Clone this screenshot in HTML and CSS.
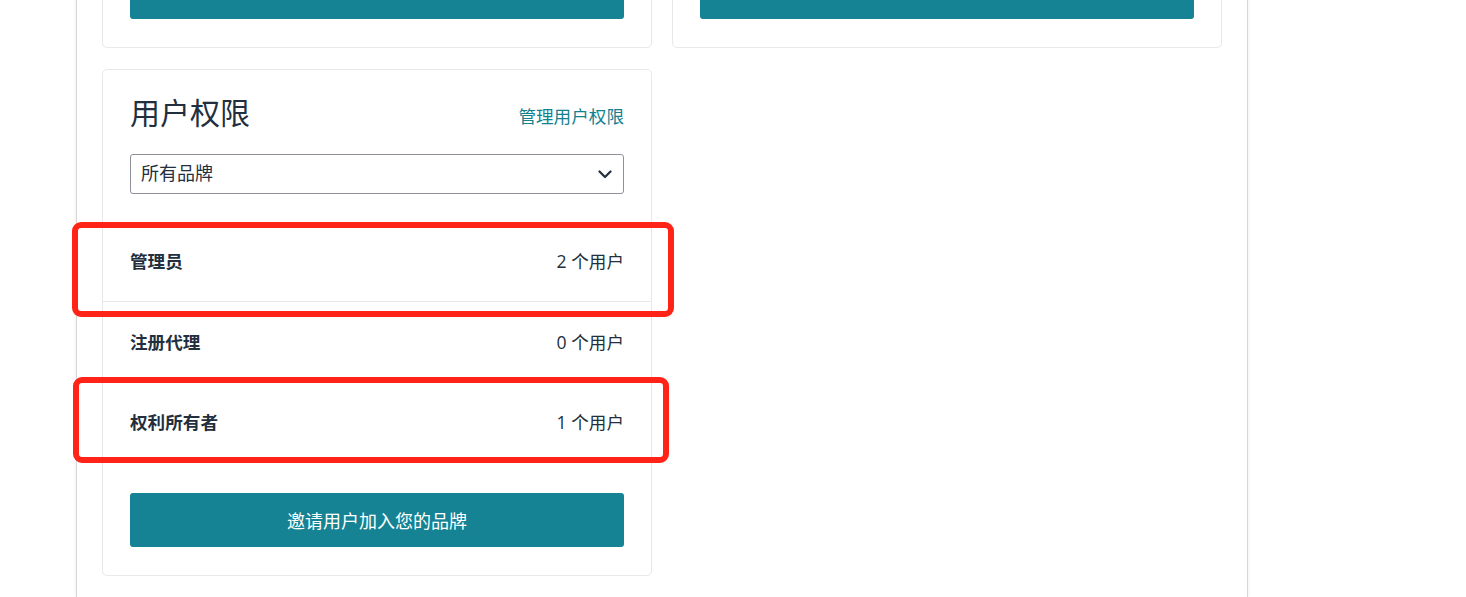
FILE: index.html
```html
<!DOCTYPE html>
<html lang="zh-CN">
<head>
<meta charset="utf-8">
<title>用户权限</title>
<link rel="stylesheet" href="styles.css">
</head>
<body>
<div class="page">
  <div class="grid">
    <div class="card top-card">
      <button class="btn">&nbsp;</button>
    </div>
    <div class="card top-card">
      <button class="btn">&nbsp;</button>
    </div>
    <div class="card perm-card">
      <div class="perm-head">
        <h2 class="perm-title">用户权限</h2>
        <a class="perm-link" href="#">管理用户权限</a>
      </div>
      <div class="select">
        <span class="select-text">所有品牌</span>
        <svg class="chev" width="14" height="9" viewBox="0 0 14 9"><path d="M1.5 1.5 L7 7 L12.5 1.5" fill="none" stroke="#232f3e" stroke-width="2.2" stroke-linecap="round" stroke-linejoin="round"/></svg>
      </div>
      <div class="rows">
        <div class="row row-sep"><span class="role">管理员</span><span class="count">2 个用户</span></div>
        <div class="row"><span class="role">注册代理</span><span class="count">0 个用户</span></div>
        <div class="row"><span class="role">权利所有者</span><span class="count">1 个用户</span></div>
      </div>
      <button class="btn invite">邀请用户加入您的品牌</button>
    </div>
  </div>
</div>
<div class="mark mark-1"></div>
<div class="mark mark-2"></div>
</body>
</html>
```

FILE: styles.css
```css
html, body {
  margin: 0;
  padding: 0;
  height: 100%;
  overflow: hidden;
  background: #ffffff;
}
body {
  position: relative;
  font-family: "Open Sans", "Noto Sans CJK SC", sans-serif;
  color: #232f3e;
}
.page {
  margin-left: 76px;
  margin-top: -64px;
  width: 1172px;
  height: calc(100% + 64px);
  border-left: 1px solid #d6d6d8;
  border-right: 1px solid #d6d6d8;
  box-shadow: 0 0 4px rgba(0,0,0,0.08);
  background: #fff;
  box-sizing: border-box;
}
.grid {
  display: grid;
  grid-template-columns: 550px 550px;
  column-gap: 20px;
  row-gap: 21px;
  padding-left: 25px;
  align-items: start;
}
.card {
  border: 1px solid #e7e8ea;
  border-radius: 5px;
  background: #fff;
  box-sizing: border-box;
}
.top-card {
  padding: 28px 27px 28px 27px;
}
.btn {
  display: block;
  width: 100%;
  height: 54px;
  border: none;
  border-radius: 3px;
  background: #158394;
  color: #fff;
  font-family: "Open Sans", "Noto Sans CJK SC", sans-serif;
  font-size: 18px;
  padding: 0;
}
.perm-card {
  padding: 23px 27px 28px 27px;
}
.perm-head {
  display: flex;
  justify-content: space-between;
  align-items: center;
  height: 40px;
}
.perm-title {
  margin: 0;
  font-size: 30px;
  font-weight: 400;
  line-height: 40px;
  color: #232f3e;
}
.perm-link {
  font-size: 17.6px;
  color: #14818f;
  text-decoration: none;
  line-height: 24px;
  margin-top: 6px;
}
.select {
  margin-top: 21px;
  height: 40px;
  border: 1px solid #8e9199;
  border-radius: 3px;
  box-sizing: border-box;
  display: flex;
  align-items: center;
  justify-content: space-between;
  padding: 0 11px 0 10px;
  font-size: 18px;
}
.select-text {
  line-height: 24px;
  margin-top: -3px;
}
.chev {
  display: block;
}
.rows {
  margin: 28px -27px 0 -27px;
}
.row {
  height: 80px;
  box-sizing: border-box;
  padding: 0 27px 2px 27px;
  display: flex;
  align-items: center;
  justify-content: space-between;
  font-size: 17.6px;
}
.row-sep {
  border-bottom: 1px solid #e7e8ea;
}
.role {
  font-weight: 700;
}
.invite {
  margin-top: 31px;
}
.mark {
  position: absolute;
  border: 6px solid #ff2417;
  border-radius: 9px;
  box-sizing: border-box;
  pointer-events: none;
}
.mark-1 {
  left: 72px;
  top: 222px;
  width: 602px;
  height: 95px;
}
.mark-2 {
  left: 73px;
  top: 377px;
  width: 596px;
  height: 86px;
}
```
